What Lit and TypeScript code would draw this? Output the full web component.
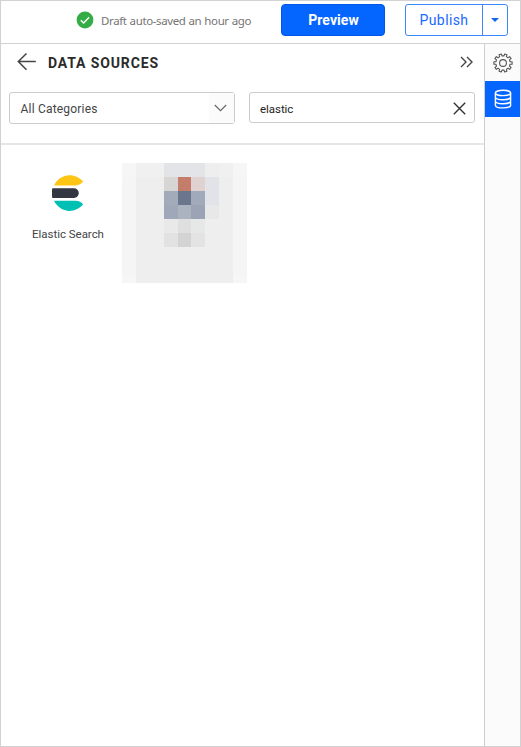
import { LitElement, html, css } from "lit";
import { customElement } from "lit/decorators.js";
import { styleMap } from "lit/directives/style-map.js";

const MOSAIC: string[][] = [
  ["#f6f6f6", "#f0f0f0", "#f0f0f0", "#e2e4e8", "#e3e4e8", "#e3e4e8", "#eeeeef", "#f0f0f0", "#f6f6f6"],
  ["#f5f5f5", "#eeeeee", "#eeeeee", "#d8d5d5", "#c47c6b", "#dfd2d0", "#e1e3e8", "#eeeeee", "#f5f5f5"],
  ["#f5f5f5", "#eeeeee", "#eeeeee", "#a2abb9", "#6a768b", "#a1aaba", "#e1e3e8", "#eeeeee", "#f5f5f5"],
  ["#f5f5f5", "#eeeeee", "#eeeeee", "#9fa8b8", "#abb3c1", "#9ca3b5", "#e8e8e8", "#eeeeee", "#f5f5f5"],
  ["#f5f5f5", "#eeeeee", "#eeeeee", "#e8e9e8", "#dfdfdf", "#e6e8e7", "#eeeeee", "#eeeeee", "#f5f5f5"],
  ["#f5f5f5", "#eeeeee", "#eeeeee", "#e2e2e2", "#d3d3d3", "#e3e3e3", "#eeeeee", "#eeeeee", "#f5f5f5"],
  ["#f5f5f5", "#eeeeee", "#eeeeee", "#eeeeee", "#eeeeee", "#eeeeee", "#eeeeee", "#eeeeee", "#f5f5f5"],
  ["#f5f5f5", "#eeeeee", "#eeeeee", "#eeeeee", "#eeeeee", "#eeeeee", "#eeeeee", "#eeeeee", "#f5f5f5"],
  ["#f6f6f6", "#eeeeee", "#eeeeee", "#eeeeee", "#eeeeee", "#eeeeee", "#eeeeee", "#eeeeee", "#f6f6f6"],
];

// Outline of a ten-toothed cog centred on (10, 10).
function cogPath(): string {
  const pts: string[] = [];
  for (let i = 0; i < 10; i++) {
    for (const [offset, r] of [[-10, 7.2], [-7.5, 9.2], [7.5, 9.2], [10, 7.2]]) {
      const a = ((i * 36 + offset) * Math.PI) / 180;
      pts.push(`${(10 + r * Math.cos(a)).toFixed(2)} ${(10 + r * Math.sin(a)).toFixed(2)}`);
    }
  }
  return `M${pts.join("L")}Z`;
}

@customElement("app-root")
export class AppRoot extends LitElement {
  static styles = css`
    :host {
      display: block;
      height: 747px;
      font-family: Roboto, "Liberation Sans", sans-serif;
      color: #333;
    }
    * { box-sizing: border-box; }
    svg { display: block; flex: none; fill: none; }
    button { font: inherit; padding: 0; margin: 0; border: 0; background: none; color: inherit; }
    .app {
      height: 747px;
      border: 1px solid #d2d2d2;
      background: #fff;
      display: flex;
      flex-direction: column;
    }
    .top {
      height: 43px;
      flex: none;
      border-bottom: 1px solid #d0d0d0;
      display: flex;
      align-items: flex-start;
      padding: 3px 12px 0 75px;
    }
    .status { display: flex; align-items: center; height: 32px; width: 205px; }
    .saved {
      font: 11.5px/16px "Noto Sans", sans-serif;
      color: #757575;
      margin-left: 7px;
      padding-top: 1px;
      white-space: nowrap;
      letter-spacing: -0.38px;
      word-spacing: 0.4px;
    }
    .preview {
      width: 104px;
      height: 32px;
      border-radius: 4px;
      border: 1px solid #0057e8;
      background: #0565ff;
      color: #fff;
      font-size: 14px;
      font-weight: 700;
      letter-spacing: 0.05px;
      padding-left: 1px;
    }
    .publish {
      margin-left: 20px;
      width: 103px;
      height: 32px;
      display: flex;
      border: 1px solid #3d86fb;
      border-radius: 3px;
      color: #1769ff;
    }
    .publish-main { width: 77px; font-size: 14px; font-weight: 450; letter-spacing: 0.4px; border-right: 1px solid #3d86fb; }
    .publish-more { flex: 1; display: grid; place-items: center; }
    .body { flex: 1; display: flex; min-height: 0; }
    .panel { flex: 1; }
    .controls { height: 101px; border-bottom: 2px solid #e6e6e6; }
    .title { height: 38px; padding: 0 12px 2px 16px; display: flex; align-items: center; }
    .title h1 {
      margin: 2px auto 0 12px;
      font-size: 14px;
      line-height: 18px;
      font-weight: 700;
      letter-spacing: 0.87px;
      color: #2b2b2b;
    }
    .filters { display: flex; align-items: flex-start; padding: 10px 9px 0 8px; gap: 14px; }
    .box {
      height: 31px;
      border: 1px solid #ccc;
      border-radius: 3px;
      display: flex;
      align-items: center;
      font-size: 12px;
      line-height: 16px;
    }
    .select { height: 32px; width: 226px; padding-left: 10.5px; letter-spacing: 0.2px; justify-content: space-between; color: #444; }
    .select > span:first-child { padding-top: 1px; }
    .drop { align-self: stretch; width: 25px; display: grid; place-items: center start; background: #fbfbfb; padding-left: 5px; }
    .search { width: 226px; padding: 1px 8px 0 10px; justify-content: space-between; color: #222; font-size: 11.5px; letter-spacing: -0.05px; }
    .search span { padding-top: 2px; }
    .sources { display: flex; padding: 18px 14px; }
    .source { width: 106px; margin-right: 1px; display: flex; flex-direction: column; align-items: center; padding-top: 12px; }
    .source span { font-size: 11.5px; line-height: 16px; margin-top: 15px; color: #444; letter-spacing: -0.03px; white-space: nowrap; }
    .mosaic {
      width: 125px;
      height: 120px;
      display: grid;
      grid-template-columns: repeat(9, 1fr);
      grid-template-rows: repeat(8, 14px) 8px;
    }
    .rail { width: 35px; background: #fbfbfb; box-shadow: -1px 0 0 #cfcfcf; }
    .rail button { width: 35px; height: 37px; display: grid; place-items: center; }
    .rail .active { background: #0565ff; height: 36px; }
  `;

  render() {
    return html`
      <div class="app">
        <header class="top">
          <div class="status">
            <svg width="18" height="18" viewBox="0 0 18 18">
              <circle cx="9" cy="9" r="8.4" fill="#34ad47" />
              <path d="M4.8 9.2 7.6 12l5.5-5.8" stroke="#fff" stroke-width="1.4" />
            </svg>
            <span class="saved">Draft auto-saved an hour ago</span>
          </div>
          <button class="preview">Preview</button>
          <div class="publish">
            <button class="publish-main">Publish</button>
            <button class="publish-more" aria-label="More">
              <svg width="8" height="4" viewBox="0 0 8 4"><path d="M0 0h8L4 4z" fill="#1264f0" /></svg>
            </button>
          </div>
        </header>
        <div class="body">
          <main class="panel">
            <section class="controls">
              <div class="title">
                <svg width="19" height="18" viewBox="0 0 19 18">
                  <path d="M18.8 8.5H1.5M9.5.5 1.3 8.5l8.2 8.3" stroke="#444" stroke-width="1.5" />
                </svg>
                <h1>DATA SOURCES</h1>
                <svg width="13" height="12" viewBox="0 0 13 12">
                  <path d="m1 1 5 5-5 5M7 1l5 5-5 5" stroke="#444" stroke-width="1.4" />
                </svg>
              </div>
              <div class="filters">
                <div class="box select">
                  <span>All Categories</span>
                  <span class="drop">
                    <svg width="13" height="8" viewBox="0 0 13 8"><path d="m.8 1 5.7 5.6L12.2 1" stroke="#666" stroke-width="1.2" /></svg>
                  </span>
                </div>
                <div class="box search">
                  <span>elastic</span>
                  <svg width="13" height="13" viewBox="0 0 13 13"><path d="m.8.8 11.4 11.4M12.2.8.8 12.2" stroke="#333" stroke-width="1.4" /></svg>
                </div>
              </div>
            </section>
            <section class="sources">
              <div class="source">
                <svg width="32" height="36" viewBox="0 0 32 36">
                  <path d="M2 10.4C4.9 4.4 10.8.2 17.5.2c5.4 0 10.6 2.6 13.6 6.4-1.5 2.4-4.4 3.8-7.4 3.8z" fill="#fec514" />
                  <path d="M.4 13.3H22a4.8 4.8 0 0 1 0 9.6H.4a18 18 0 0 1 0-9.6z" fill="#343741" />
                  <path d="M2 25.8h21.7c3 0 5.8 1.3 7.4 3.5-3 4-8.2 6.6-13.6 6.6-6.7 0-12.6-4.1-15.5-10.1z" fill="#00bfb3" />
                </svg>
                <span>Elastic Search</span>
              </div>
              <div class="mosaic">
                ${MOSAIC.flat().map((background) => html`<i style=${styleMap({ background })}></i>`)}
              </div>
            </section>
          </main>
          <nav class="rail">
            <button aria-label="Settings">
              <svg width="20" height="20" viewBox="0 0 20 20" stroke="#555" stroke-width="1.1" stroke-linejoin="round">
                <path d=${cogPath()} /><circle cx="10" cy="10" r="3.4" />
              </svg>
            </button>
            <button class="active" aria-label="Data">
              <svg width="18" height="20" viewBox="0 0 18 20" stroke="#fff" stroke-width="1.4">
                <ellipse cx="9" cy="3.9" rx="7.6" ry="2.7" />
                <path d="M1.4 4v12.2c0 1.5 3.4 2.7 7.6 2.7s7.6-1.2 7.6-2.7V4M1.4 8c0 1.5 3.4 2.7 7.6 2.7s7.6-1.2 7.6-2.7M1.4 12c0 1.5 3.4 2.7 7.6 2.7s7.6-1.2 7.6-2.7" />
              </svg>
            </button>
          </nav>
        </div>
      </div>
    `;
  }
}
